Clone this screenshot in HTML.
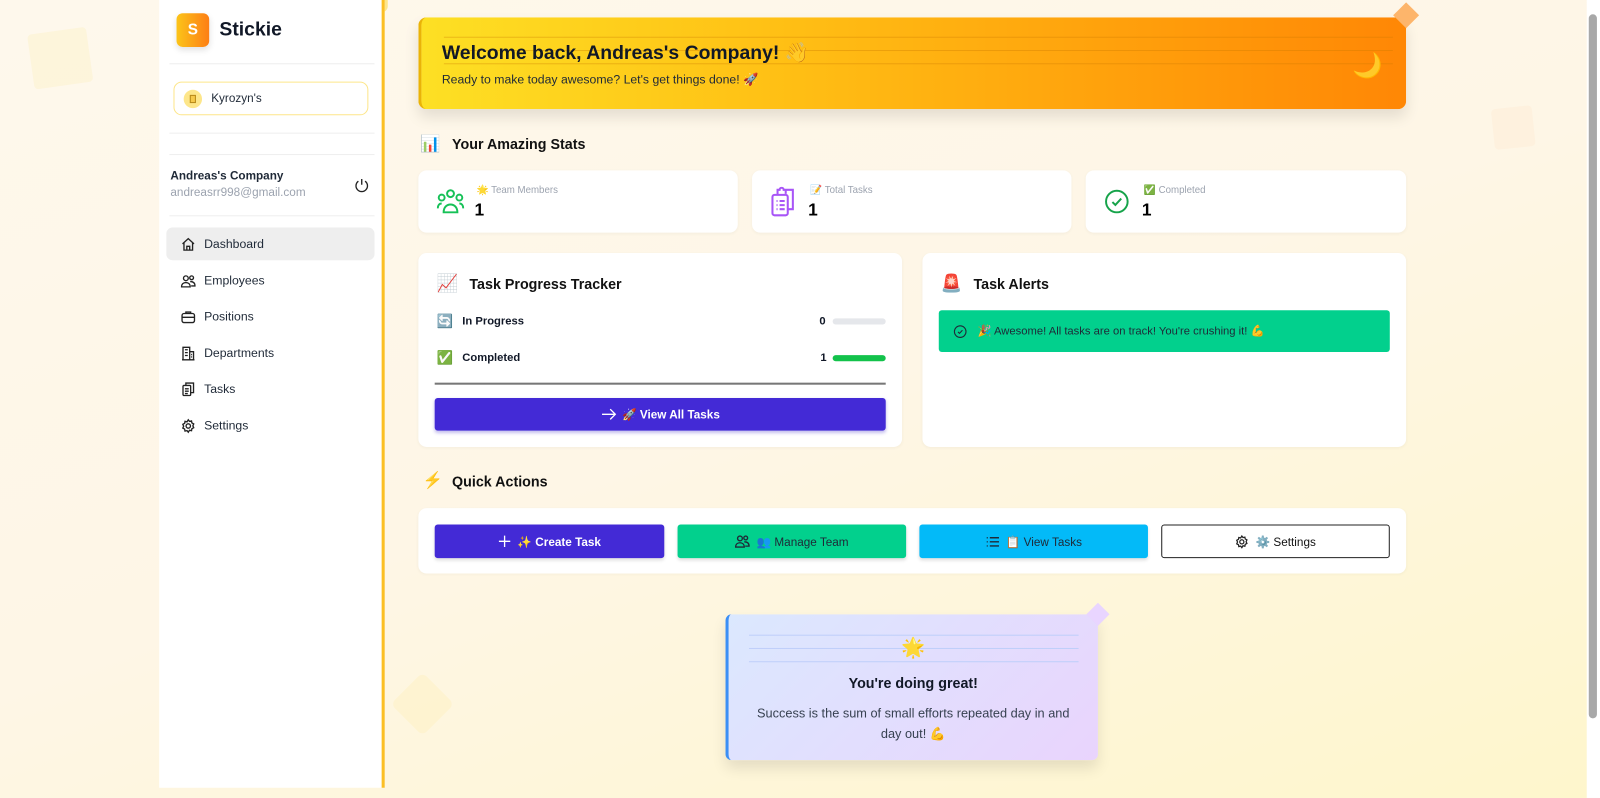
<!DOCTYPE html>
<html><head><meta charset="utf-8"><style>
*{box-sizing:border-box;margin:0;padding:0}
html,body{width:1600px;height:798px;overflow:hidden;font-family:"Liberation Sans","Noto Sans CJK SC",sans-serif;color:#111827}
#w{position:absolute;left:0;top:0;width:1568px;height:782px;transform:scale(1.020408);transform-origin:0 0;background:linear-gradient(160deg,#fef8ec 0%,#fef6e6 50%,#fef6cc 100%);overflow:hidden}
.a{position:absolute}
.card{position:absolute;background:#fff;border-radius:8px;box-shadow:0 1px 3px rgba(0,0,0,.04)}
.nav{position:absolute;left:163px;width:204px;height:32px;border-radius:6px;font-size:12px;color:#1f2937;display:flex;align-items:center;padding-left:14px;gap:8px}
.nav svg{width:15px;height:15px;fill:none;stroke:#222;stroke-width:1.4}
.btn{position:absolute;top:514px;height:33px;border-radius:3px;color:#fff;font-size:11.5px;font-weight:bold;display:flex;align-items:center;justify-content:center;gap:6px;box-shadow:0 2px 3px rgba(0,0,0,.12)}
.btn svg{fill:none;stroke-width:1.4}
.lbl{font-size:9.5px;color:#9ca3af}
.val{font-size:17px;font-weight:bold;color:#000}
.h{position:absolute;font-size:14px;font-weight:bold;color:#111}
</style></head><body><div id="w">
<div class="a" style="left:30px;top:30px;width:58px;height:54px;background:#fdf1c4;opacity:.4;transform:rotate(-8deg);border-radius:4px"></div>
<div class="a" style="left:1463px;top:105px;width:40px;height:40px;background:#feefd9;opacity:.6;transform:rotate(-6deg);border-radius:4px"></div>
<div class="a" style="left:392px;top:668px;width:44px;height:44px;background:#fdf0c2;transform:rotate(45deg);border-radius:6px;opacity:.5"></div>
<div class="a" style="left:360px;top:-8px;width:20px;height:20px;background:#fde68a;border-radius:6px"></div>

<div class="a" style="left:156px;top:0;width:221px;height:772px;background:#fff;border-right:3px solid #fbbf24"></div>
<div class="a" style="left:173px;top:13px;width:32px;height:33px;border-radius:6px;background:linear-gradient(90deg,#fcc419,#fd7e14);color:#fff;font-weight:bold;font-size:15px;display:flex;align-items:center;justify-content:center;box-shadow:0 3px 6px rgba(0,0,0,.12)">S</div>
<div class="a" style="left:215px;top:19px;font-size:19px;font-weight:bold">Stickie</div>
<div class="a" style="left:166px;top:62px;width:201px;height:1px;background:#eee"></div>
<div class="a" style="left:170px;top:80px;width:191px;height:33px;border:1px solid #fde68a;border-radius:8px"></div>
<div class="a" style="left:180px;top:88px;width:18px;height:18px;border-radius:50%;background:#fde68a"><div style="margin:5px 0 0 6px;width:6px;height:8px;border:1px solid #b78a1a;background:#f6c94a"></div></div>
<div class="a" style="left:207px;top:91px;font-size:11.5px;color:#1f2937">Kyrozyn's</div>
<div class="a" style="left:166px;top:130px;width:201px;height:1px;background:#eee"></div>
<div class="a" style="left:166px;top:151px;width:201px;height:1px;background:#eee"></div>
<div class="a" style="left:167px;top:167px;font-size:11.5px;font-weight:bold;color:#1f2937">Andreas's Company</div>
<div class="a" style="left:167px;top:183px;font-size:11.5px;color:#9ca3af">andreasrr998@gmail.com</div>
<svg class="a" style="left:347px;top:174px" width="15" height="15" viewBox="0 0 16 16" fill="none" stroke="#222" stroke-width="1.4"><path d="M8 1.5v6"/><path d="M4.5 3.8a6 6 0 1 0 7 0"/></svg>
<div class="a" style="left:166px;top:211px;width:201px;height:1px;background:#eee"></div>
<div class="nav" style="top:223px;background:#eeeeee"><svg viewBox="0 0 16 16"><path d="M2 7.5L8 2l6 5.5M3.5 6.5V14h9V6.5M6.5 14V10h3v4"/></svg>Dashboard</div>
<div class="nav" style="top:259px"><svg viewBox="0 0 16 16"><circle cx="5.5" cy="5" r="2.5"/><circle cx="11.5" cy="4.5" r="2"/><path d="M1 14c0-3 2-4.5 4.5-4.5S10 11 10 14zM10 8.5c3 0 5 1.5 5 4.5h-4"/></svg>Employees</div>
<div class="nav" style="top:294px"><svg viewBox="0 0 16 16"><rect x="1.5" y="4.5" width="13" height="9.5" rx="2"/><path d="M5.5 4.5V3h5v1.5M1.5 8.5h13"/></svg>Positions</div>
<div class="nav" style="top:330px"><svg viewBox="0 0 16 16"><path d="M1.5 14.5h13M2.5 14.5V1.5h7v13M9.5 6h4v8.5M4.5 4h3M4.5 7h3M4.5 10h3M11 9h1M11 11.5h1"/></svg>Departments</div>
<div class="nav" style="top:365px"><svg viewBox="0 0 16 16"><rect x="2.5" y="4" width="8" height="10.5" rx="1"/><path d="M5.5 4V1.5h8v10h-3M4.5 7.5h4M4.5 10h4M4.5 12.5h3"/></svg>Tasks</div>
<div class="nav" style="top:401px"><svg viewBox="0 0 16 16"><circle cx="8" cy="8" r="2.3"/><path d="M8 1.5l1.3 1.7 2.1-.5.4 2.1 1.9 1-.9 2 .9 2-1.9 1-.4 2.1-2.1-.5L8 14.5l-1.3-1.7-2.1.5-.4-2.1-1.9-1 .9-2-.9-2 1.9-1 .4-2.1 2.1.5z"/></svg>Settings</div>

<div class="a" style="left:410px;top:17px;width:968px;height:90px;border-radius:8px;border-left:3px solid #eab308;background:linear-gradient(90deg,#fde024 0%,#ffc115 35%,#ffa10c 70%,#ff8705 100%);box-shadow:0 8px 14px rgba(0,0,0,.1);overflow:hidden">
<div class="a" style="left:22px;top:19px;width:930px;height:1px;background:rgba(200,120,0,.35)"></div>
<div class="a" style="left:22px;top:32px;width:930px;height:1px;background:rgba(200,120,0,.35)"></div>
<div class="a" style="left:22px;top:45px;width:930px;height:1px;background:rgba(200,120,0,.35)"></div>
<div class="a" style="left:20px;top:23px;font-size:19px;font-weight:bold;color:#111827">Welcome back, Andreas's Company! 👋</div>
<div class="a" style="left:20px;top:54px;font-size:12px;color:#1f2937">Ready to make today awesome? Let's get things done! 🚀</div>
<div class="a" style="left:912px;top:33px;font-size:24px">🌙</div>
</div>
<div class="a" style="left:1369px;top:6px;width:18px;height:18px;background:#fdb56b;transform:rotate(45deg)"></div>

<div class="a" style="left:412px;top:131px;font-size:16px">📊</div>
<div class="h" style="left:443px;top:133px">Your Amazing Stats</div>

<div class="card" style="left:410px;top:167px;width:313px;height:61px">
<svg class="a" style="left:18px;top:18px" width="27" height="25" viewBox="0 0 28 26" fill="none" stroke="#16c157" stroke-width="2"><circle cx="14" cy="5" r="3.5"/><circle cx="5" cy="9" r="3"/><circle cx="23" cy="9" r="3"/><path d="M7 24c0-5 3-8 7-8s7 3 7 8zM1 20c0-3 1.5-5 4-5M27 20c0-3-1.5-5-4-5"/></svg>
<div class="a lbl" style="left:57px;top:14px">🌟 Team Members</div><div class="a val" style="left:55px;top:29px">1</div></div>
<div class="card" style="left:737px;top:167px;width:313px;height:61px">
<svg class="a" style="left:18px;top:16px" width="26" height="30" viewBox="0 0 26 30" fill="none" stroke="#a855f7" stroke-width="2"><rect x="2" y="8" width="15" height="20" rx="2"/><path d="M7 8V3h2a2 2 0 0 1 4 0h2v4M13 3h9v19h-5M6 14h1M9 14h5M6 18h1M9 18h5M6 22h1M9 22h5"/></svg>
<div class="a lbl" style="left:57px;top:14px">📝 Total Tasks</div><div class="a val" style="left:55px;top:29px">1</div></div>
<div class="card" style="left:1064px;top:167px;width:314px;height:61px">
<svg class="a" style="left:18px;top:18px" width="25" height="25" viewBox="0 0 26 26" fill="none" stroke="#16a34a" stroke-width="2"><circle cx="13" cy="13" r="11"/><path d="M8.5 13.5l3 3 6-6.5"/></svg>
<div class="a lbl" style="left:57px;top:14px">✅ Completed</div><div class="a val" style="left:55px;top:29px">1</div></div>

<div class="card" style="left:410px;top:248px;width:474px;height:190px">
<div class="a" style="left:18px;top:20px;font-size:17px">📈</div>
<div class="h" style="left:50px;top:22px">Task Progress Tracker</div>
<div class="a" style="left:18px;top:59px;font-size:13px">🔄</div>
<div class="a" style="left:43px;top:61px;font-size:11px;font-weight:bold">In Progress</div>
<div class="a" style="left:393px;top:61px;font-size:11px;font-weight:bold">0</div>
<div class="a" style="left:406px;top:64px;width:52px;height:6px;border-radius:3px;background:#e5e7eb"></div>
<div class="a" style="left:18px;top:95px;font-size:13px">✅</div>
<div class="a" style="left:43px;top:97px;font-size:11px;font-weight:bold">Completed</div>
<div class="a" style="left:394px;top:97px;font-size:11px;font-weight:bold">1</div>
<div class="a" style="left:406px;top:100px;width:52px;height:6px;border-radius:3px;background:#13c24b"></div>
<div class="a" style="left:16px;top:127px;width:442px;height:2px;background:#777"></div>
<div class="a" style="left:16px;top:142px;width:442px;height:32px;border-radius:3px;background:#432ad6;color:#fff;font-size:11.5px;font-weight:bold;display:flex;align-items:center;justify-content:center;gap:6px;box-shadow:0 2px 3px rgba(60,40,200,.3)"><svg width="15" height="12" viewBox="0 0 15 12" fill="none" stroke="#fff" stroke-width="1.3"><path d="M1 6h13M9 1l5 5-5 5"/></svg>🚀 View All Tasks</div>
</div>
<div class="card" style="left:904px;top:248px;width:474px;height:190px">
<div class="a" style="left:18px;top:20px;font-size:17px">🚨</div>
<div class="h" style="left:50px;top:22px">Task Alerts</div>
<div class="a" style="left:16px;top:56px;width:442px;height:41px;border-radius:3px;background:#02d08d;font-size:11px;color:#1f2937;display:flex;align-items:center;padding-left:14px;gap:10px"><svg width="14" height="14" viewBox="0 0 16 16" fill="none" stroke="#1f2937" stroke-width="1.2"><circle cx="8" cy="8" r="6.5"/><path d="M5.5 8.3l1.7 1.7 3.3-3.5"/></svg>🎉 Awesome! All tasks are on track! You're crushing it! 💪</div>
</div>

<div class="a" style="left:414px;top:461px;font-size:16px">⚡</div>
<div class="h" style="left:443px;top:464px">Quick Actions</div>
<div class="card" style="left:410px;top:498px;width:968px;height:64px"></div>
<div class="btn" style="left:426px;width:225px;background:#432ad6"><svg width="13" height="13" viewBox="0 0 14 14" stroke="#fff"><path d="M7 1v12M1 7h12"/></svg>✨ Create Task</div>
<div class="btn" style="left:664px;width:224px;background:#02d08d;color:#1f2937;font-weight:normal"><svg width="15" height="15" viewBox="0 0 16 16" stroke="#1f2937"><circle cx="5.5" cy="5" r="2.5"/><circle cx="11.5" cy="4.5" r="2"/><path d="M1 14c0-3 2-4.5 4.5-4.5S10 11 10 14zM10 8.5c3 0 5 1.5 5 4.5h-4"/></svg>👥 Manage Team</div>
<div class="btn" style="left:901px;width:224px;background:#03baf8;color:#1f2937;font-weight:normal"><svg width="14" height="12" viewBox="0 0 14 12" stroke="#1f2937"><path d="M1 2h1M1 6h1M1 10h1M4 2h9M4 6h9M4 10h9"/></svg>📋 View Tasks</div>
<div class="btn" style="left:1138px;width:224px;background:#fff;border:1px solid #222;color:#111;box-shadow:none;font-weight:normal"><svg width="14" height="14" viewBox="0 0 16 16" stroke="#222"><circle cx="8" cy="8" r="2.3"/><path d="M8 1.5l1.3 1.7 2.1-.5.4 2.1 1.9 1-.9 2 .9 2-1.9 1-.4 2.1-2.1-.5L8 14.5l-1.3-1.7-2.1.5-.4-2.1-1.9-1 .9-2-.9-2 1.9-1 .4-2.1 2.1.5z"/></svg>⚙️ Settings</div>

<div class="a" style="left:711px;top:602px;width:365px;height:143px;border-radius:6px;border-left:3px solid #3b8ff6;background:linear-gradient(135deg,#dbe8fe,#e9d4fd);box-shadow:0 8px 14px rgba(0,0,0,.1)">
<div class="a" style="left:20px;top:20px;width:323px;height:1px;background:#bfcffa"></div>
<div class="a" style="left:20px;top:33px;width:323px;height:1px;background:#bfcffa"></div>
<div class="a" style="left:20px;top:46px;width:323px;height:1px;background:#bfcffa"></div>
<div class="a" style="left:0;top:21px;width:362px;text-align:center;font-size:19px">🌟</div>
<div class="a" style="left:0;top:59px;width:362px;text-align:center;font-size:14px;font-weight:bold">You're doing great!</div>
<div class="a" style="left:20px;top:87px;width:322px;text-align:center;font-size:12.5px;line-height:20px;color:#374151">Success is the sum of small efforts repeated day in and day out! 💪</div>
</div>
<div class="a" style="left:1068px;top:594px;width:16px;height:16px;background:#e9d5ff;transform:rotate(45deg)"></div>

<div class="a" style="left:1555px;top:0;width:13px;height:782px;background:#fff"></div>
<div class="a" style="left:1557px;top:14px;width:8px;height:690px;border-radius:4px;background:#a8a8a8"></div>
</div></body></html>
